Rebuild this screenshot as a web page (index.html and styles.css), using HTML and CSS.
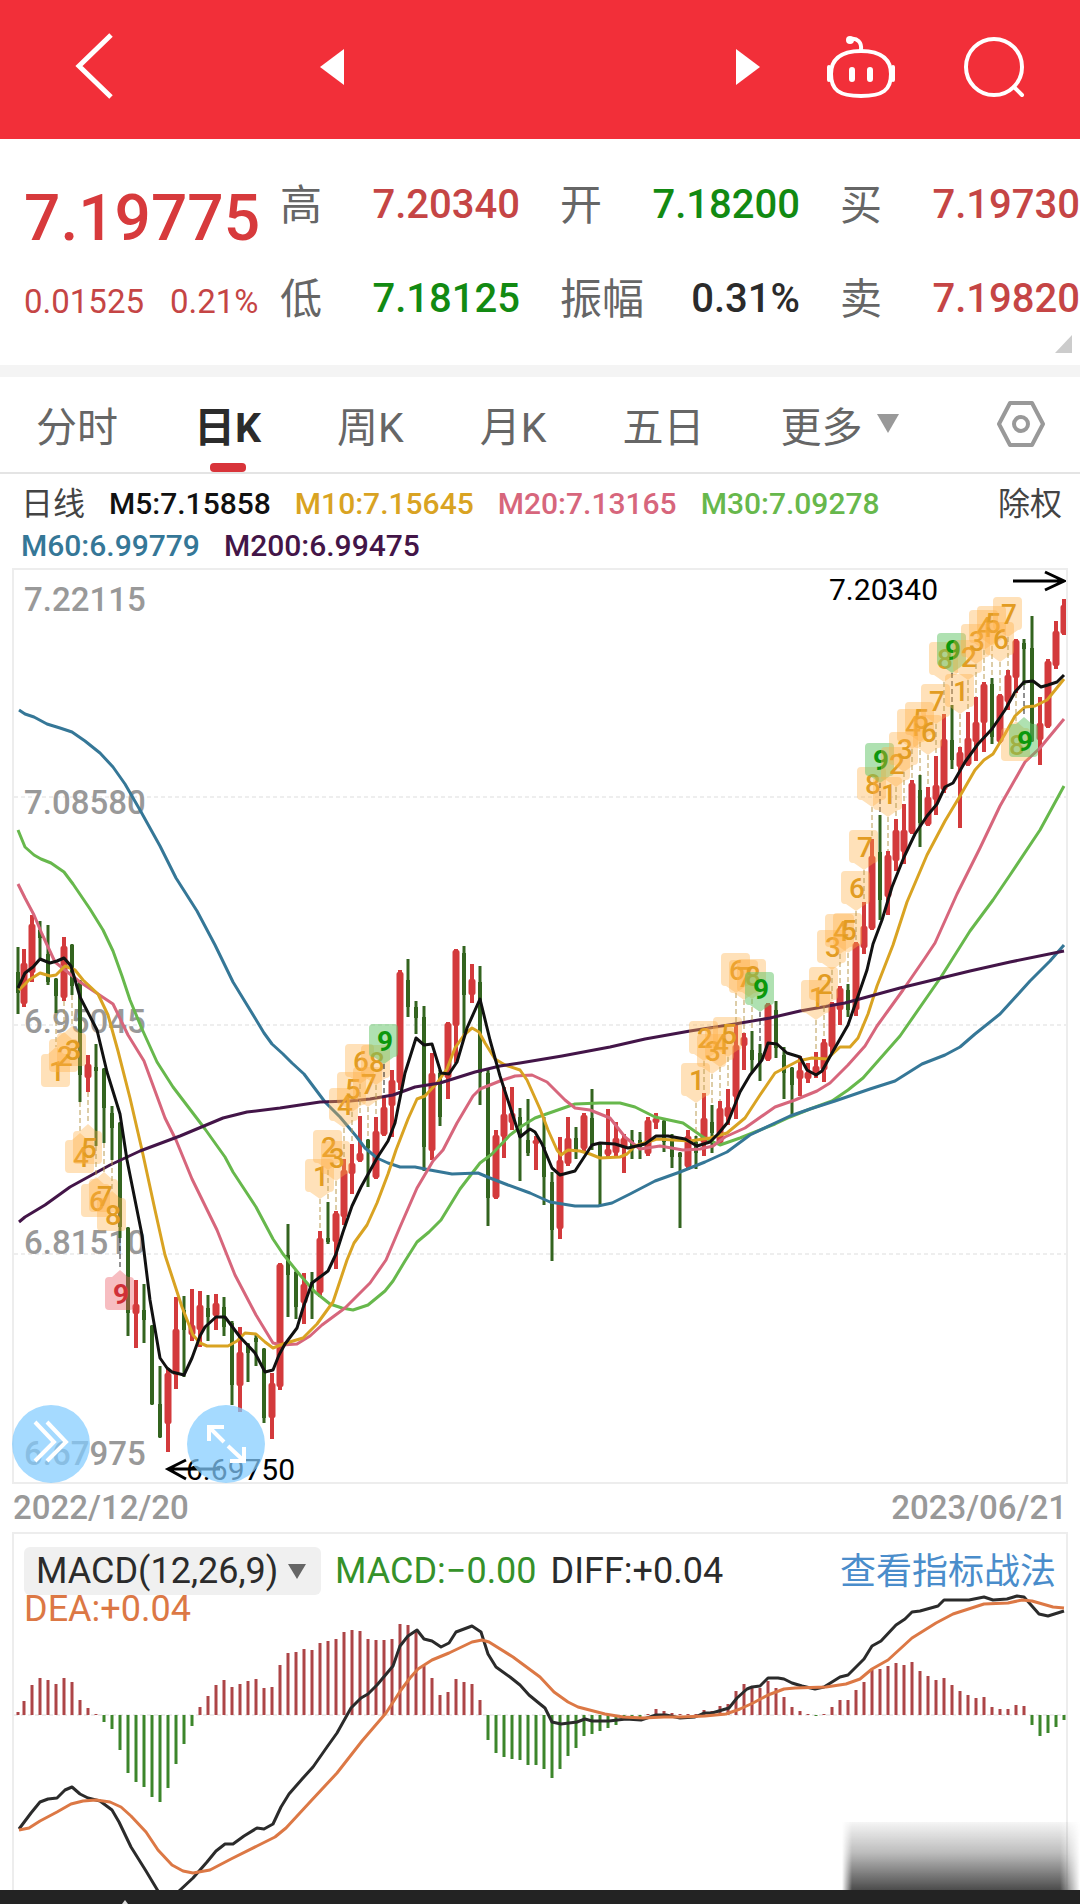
FILE: index.html
```
<!DOCTYPE html>
<html lang="zh-CN">
<head>
    <meta charset="UTF-8">
    <meta name="viewport" content="width=device-width, initial-scale=1.0">
    <title>日K行情</title>
    <link rel="stylesheet" href="styles.css">
</head>
<body>
    <!-- top bar -->
    <header class="topbar">
        <button class="icon-button" aria-label="返回">
            <svg width="50" height="70" viewBox="0 0 50 70"><path d="M43 3 L11 34 L43 65" fill="none" stroke="#fff" stroke-width="5"/></svg>
        </button>
        <nav class="switcher">
            <button class="icon-button" aria-label="上一个">
                <svg width="24" height="36" viewBox="0 0 24 36"><path d="M24 0 V36 L0 18 Z" fill="#fff"/></svg>
            </button>
            <button class="icon-button" aria-label="下一个">
                <svg width="24" height="36" viewBox="0 0 24 36"><path d="M0 0 V36 L24 18 Z" fill="#fff"/></svg>
            </button>
        </nav>
        <button class="icon-button" aria-label="助手">
            <svg width="70" height="66" viewBox="0 0 70 66">
                <g fill="none" stroke="#fff" stroke-width="4" stroke-linecap="round">
                    <path d="M35 17 C57 17 65 27 65 40 C65 56 57 62 35 62 C13 62 5 56 5 40 C5 27 13 17 35 17 Z"/>
                    <path d="M35 16 C36 8 31 4 25 5"/>
                    <path d="M3 33 V46 M67 33 V46"/>
                    <path d="M26 36 V45 M44 36 V45" stroke-width="6"/>
                </g>
                <circle cx="24" cy="6" r="4" fill="#fff"/>
            </svg>
        </button>
        <button class="icon-button" aria-label="搜索">
            <svg width="64" height="64" viewBox="0 0 64 64">
                <g fill="none" stroke="#fff" stroke-width="4" stroke-linecap="round"><circle cx="30" cy="32" r="28"/><path d="M50 52 L58 60"/></g>
            </svg>
        </button>
    </header>

    <!-- quote numbers -->
    <section class="quote">
        <div class="primary">
            <div class="price">7.19775</div>
            <div class="change"><span>0.01525</span><span>0.21%</span></div>
        </div>
        <dl class="details">
            <div><dt>高</dt><dd class="up">7.20340</dd></div>
            <div><dt>开</dt><dd class="down">7.18200</dd></div>
            <div><dt>买</dt><dd class="up">7.19730</dd></div>
            <div><dt>低</dt><dd class="down">7.18125</dd></div>
            <div><dt>振幅</dt><dd>0.31%</dd></div>
            <div><dt>卖</dt><dd class="up">7.19820</dd></div>
        </dl>
        <span class="corner"></span>
    </section>

    <!-- period tabs -->
    <nav class="tabs">
        <button>分时</button>
        <button class="active">日K</button>
        <button>周K</button>
        <button>月K</button>
        <button>五日</button>
        <button class="more">更多<svg width="22" height="19" viewBox="0 0 22 19"><path d="M0 0 H22 L11 19 Z" fill="#999"/></svg></button>
        <button class="settings" aria-label="设置">
            <svg width="50" height="48" viewBox="0 0 50 48"><g fill="none" stroke="#999" stroke-width="4" stroke-linejoin="round"><path d="M14 3 H36 L47 24 L36 45 H14 L3 24 Z"/><circle cx="25" cy="24" r="7"/></g></svg>
        </button>
    </nav>

    <!-- moving averages -->
    <div class="averages">
        <div class="list">
            <span class="name">日线</span>
            <span class="m5">M5:7.15858</span>
            <span class="m10">M10:7.15645</span>
            <span class="m20">M20:7.13165</span>
            <span class="m30">M30:7.09278</span>
            <span class="m60">M60:6.99779</span>
            <span class="m200">M200:6.99475</span>
        </div>
        <button>除权</button>
    </div>

    <!-- candles -->
    <section class="chart">
        <svg id="kline" viewBox="14 570 1052 912">
            <g class="grid"><path d="M14 797 H1066 M14 1025 H1066 M14 1254 H1066"/></g>
            <g class="axis">
                <text x="24" y="611">7.22115</text>
                <text x="24" y="814">7.08580</text>
                <text x="24" y="1033">6.95045</text>
                <text x="24" y="1254">6.81510</text>
                <text x="24" y="1465">6.67975</text>
            </g>
            <g id="candles"></g>
            <g id="lines"></g>
            <g id="badges"></g>
            <g class="extreme">
                <text x="829" y="600">7.20340</text>
                <path d="M1013 581 H1064 M1045 572 L1064 581 L1045 590"/>
                <text x="186" y="1480">6.69750</text>
                <path d="M220 1469 H168 M186 1460 L168 1469 L186 1479"/>
            </g>
        </svg>
        <div class="tools">
            <button aria-label="展开"><svg width="78" height="78" viewBox="0 0 78 78"><path d="M23 17 L42 37 L23 56 M35 17 L54 37 L35 56"/></svg></button>
            <button aria-label="全屏"><svg width="78" height="78" viewBox="0 0 78 78"><path d="M37 37 L22 22 M22 36 V22 H37 M41 41 L57 56 M57 42 V56 H43"/></svg></button>
        </div>
    </section>
    <div class="dates"><span>2022/12/20</span><span>2023/06/21</span></div>

    <!-- macd -->
    <section class="chart macd">
        <svg id="macd" viewBox="14 1534 1052 356">
            <path class="zero" d="M14 1715 H1066"/>
        </svg>
        <div class="macd-head">
            <div class="picker">
                <select aria-label="指标"><option>MACD(12,26,9)</option></select>
                <svg width="18" height="15" viewBox="0 0 18 15"><path d="M0 0 H18 L9 15 Z" fill="#666"/></svg>
            </div>
            <span class="macd-value">MACD:−0.00</span>
            <span>DIFF:+0.04</span>
            <a href="#">查看指标战法</a>
        </div>
        <div class="dea">DEA:+0.04</div>
        <div class="shade"></div>
    </section>
    <footer class="bottombar">
        <svg width="10" height="4" viewBox="0 0 10 4"><path d="M5 0 L8 4 H2 Z" fill="#ddd"/></svg>
    </footer>

    <script src="chart.js"></script>
</body>
</html>
```

FILE: styles.css
```
* {
    margin: 0;
    padding: 0;
    box-sizing: border-box;
}

body {
    display: flex;
    flex-direction: column;
    min-height: 100vh;
    background-color: #fff;
    color: #2b2b2b;
    font-family: Roboto, "Noto Sans CJK SC", sans-serif;
    overflow-x: hidden;
}

button {
    border: none;
    background: none;
    color: inherit;
    font: inherit;
    cursor: pointer;
}

svg {
    display: block;
}

/* top bar */
.topbar {
    display: flex;
    align-items: center;
    height: 139px;
    padding: 0 52px 6px 68px;
    background-color: #f22f39;
}

.switcher {
    flex: 1;
    display: flex;
    justify-content: space-between;
    margin: 0 66px 0 202px;
}

.topbar > .icon-button:last-child {
    margin-left: 68px;
}

/* quote numbers */
.quote {
    position: relative;
    display: flex;
    height: 226px;
    padding: 18px 0 20px 24px;
}

.primary {
    width: 256px;
    color: #d73a3c;
}

.price {
    padding-top: 12px;
    font-size: 64px;
    font-weight: 500;
    line-height: 100px;
}

.change {
    display: flex;
    gap: 26px;
    color: #c54545;
    font-size: 33px;
    line-height: 66px;
}

.details {
    flex: 1;
    display: grid;
    grid-template-columns: repeat(3, 1fr);
    grid-auto-rows: 94px;
    column-gap: 40px;
}

.details div {
    display: flex;
    justify-content: space-between;
    align-items: center;
}

.details dt {
    padding-bottom: 6px;
    color: #666;
    font-size: 42px;
}

.details dd {
    font-size: 40px;
    font-weight: 500;
}

.details .up {
    color: #c54545;
}

.details .down {
    color: #128a12;
}

.corner {
    position: absolute;
    right: 8px;
    bottom: 12px;
    border-left: 17px solid transparent;
    border-bottom: 18px solid #ccc;
}

/* period tabs */
.tabs {
    display: flex;
    gap: 76px;
    height: 109px;
    padding: 0 34px 0 36px;
    border-top: 12px solid #f4f4f4;
    border-bottom: 2px solid #e4e4e4;
    color: #666;
    font-size: 41px;
}

.tabs button {
    position: relative;
    padding-bottom: 2px;
    white-space: nowrap;
}

.tabs .active {
    color: #2b2b2b;
    font-weight: 700;
}

.tabs .active::after {
    content: "";
    position: absolute;
    left: 50%;
    bottom: 0;
    width: 36px;
    height: 9px;
    margin-left: -18px;
    border-radius: 4px;
    background-color: #d8343a;
}

.tabs .more {
    display: flex;
    align-items: center;
    gap: 14px;
}

.tabs .settings {
    margin-left: auto;
}

/* moving averages */
.averages {
    display: flex;
    align-items: flex-start;
    height: 94px;
    padding: 9px 18px 0 21px;
    font-size: 30px;
    font-weight: 500;
    line-height: 42px;
}

.averages .list {
    flex: 1;
    display: flex;
    flex-wrap: wrap;
    column-gap: 24px;
}

.averages .name,
.averages button {
    color: #444;
    font-size: 32px;
    font-weight: 400;
}

.m5 { color: #111; }
.m10 { color: #d9a322; }
.m20 { color: #d7667c; }
.m30 { color: #67b84c; }
.m60 { color: #357797; }
.m200 { color: #431548; }

/* charts */
.chart {
    position: relative;
    margin: 0 12px;
    border: 2px solid #ededed;
}

.chart > svg {
    width: 100%;
    height: auto;
}

.grid path,
.zero {
    stroke: #ddd;
    stroke-dasharray: 4 3;
}

.axis {
    fill: #999;
    font-size: 33px;
    font-weight: 500;
}

.red { fill: #d33a3c; }
.green { fill: #33641f; }

#lines polyline,
#macd polyline {
    fill: none;
    stroke: currentColor;
    stroke-width: 3;
    stroke-linejoin: round;
}

.badge text {
    font-size: 28px;
    font-weight: 500;
    text-anchor: middle;
    fill: #e29c22;
}

.badge path { fill: rgba(255, 176, 70, 0.38); }
.badge line { stroke: #b99a50; stroke-dasharray: 5 3; }

.badge.nine text { font-weight: 700; fill: #0c980c; }
.badge.nine path { fill: rgba(95, 195, 100, 0.5); }
.badge.nine line { stroke: #222; }

.badge.low text { fill: #d03038; }
.badge.low path { fill: rgba(235, 90, 100, 0.4); }

.extreme {
    fill: #000;
    font-size: 30px;
}

.extreme path {
    fill: none;
    stroke: #000;
    stroke-width: 3;
}

.tools {
    position: absolute;
    left: -2px;
    bottom: -1px;
    display: flex;
    gap: 97px;
}

.tools button {
    border-radius: 50%;
    background-color: rgba(130, 204, 255, 0.72);
}

.tools path {
    fill: none;
    stroke: #fff;
    stroke-width: 4;
}

.dates {
    display: flex;
    justify-content: space-between;
    padding: 0 13px;
    color: #999;
    font-size: 33px;
    font-weight: 500;
    line-height: 48px;
}

/* macd */
.macd {
    border-bottom: none;
    font-size: 36px;
}

.macd-head {
    position: absolute;
    top: 8px;
    left: 10px;
    right: 10px;
    display: flex;
    align-items: center;
}

.macd-head span {
    margin-left: 14px;
}

.macd-head .macd-value,
.bar-down {
    color: #35912a;
    fill: #3c862b;
}

.bar-up { fill: #ad4547; }
.diff { color: #2b2b2b; }

.macd-head a {
    margin-left: auto;
    padding-bottom: 6px;
    color: #4a8dcb;
    text-decoration: none;
}

.picker {
    position: relative;
}

.picker select {
    appearance: none;
    height: 48px;
    padding: 0 42px 0 12px;
    border: none;
    border-radius: 6px;
    background-color: #f0f0f0;
    color: #2b2b2b;
    font: inherit;
}

.picker svg {
    position: absolute;
    right: 15px;
    top: 17px;
    pointer-events: none;
}

.dea {
    position: absolute;
    top: 52px;
    left: 10px;
    line-height: 46px;
}

.dea,
.dea-line {
    color: #dc7845;
}

.shade {
    position: absolute;
    right: -14px;
    bottom: 0;
    width: 238px;
    height: 68px;
    background: linear-gradient(rgba(90, 90, 90, 0.06), rgba(90, 90, 90, 0.4) 45%, #4c4c4c);
    mask-image: linear-gradient(to right, transparent, #000 10px, #000 218px, transparent);
}

.bottombar {
    flex: 1;
    display: flex;
    align-items: flex-end;
    min-height: 14px;
    padding-left: 120px;
    background-color: #232323;
}
```

FILE: chart.js
```
const NS = "http://www.w3.org/2000/svg";

function add(parent, tag, attrs, text) {
    const el = document.createElementNS(NS, tag);
    for (const key in attrs) el.setAttribute(key, attrs[key]);
    if (text) el.textContent = text;
    parent.appendChild(el);
    return el;
}

// one slot every 8 units
const slot = i => i === 0 ? 18 : 16 + 8 * i;

// color, high, body top, body bottom, low
const candles = `G 947 972 993 1014|R 949 963 1004 1007|R 915 924 973 982|G 921 930 938 958|G 925 954 982 985
G 978 979 996 1013|R 937 946 998 1001|G 944 945 986 995|G 980 981 1075 1102|R 1055 1064 1078 1092
G 1044 1067 1071 1146|G 1068 1069 1108 1143|G 1106 1113 1128 1160|G 1122 1123 1227 1238|G 1227 1228 1313 1336
R 1280 1304 1314 1348|G 1284 1310 1320 1343|G 1325 1326 1404 1405|G 1366 1404 1437 1438|R 1368 1373 1424 1452
R 1297 1329 1375 1389|G 1296 1310 1330 1377|R 1289 1325 1335 1341|R 1291 1305 1330 1347|G 1295 1308 1317 1341
R 1294 1303 1316 1330|G 1297 1307 1327 1336|G 1321 1323 1385 1405|R 1327 1352 1386 1412|G 1343 1344 1353 1382
G 1335 1338 1342 1366|G 1348 1349 1418 1423|R 1373 1383 1418 1439|R 1263 1264 1387 1390|G 1224 1255 1275 1317
G 1270 1272 1307 1319|R 1273 1284 1303 1324|G 1272 1282 1290 1319|R 1231 1238 1293 1297|G 1202 1238 1242 1244
R 1211 1213 1242 1269|R 1159 1170 1217 1225|R 1144 1163 1174 1194|R 1116 1153 1161 1162|G 1139 1140 1148 1187
R 1117 1131 1178 1179|R 1097 1107 1135 1136|R 1070 1080 1106 1137|R 970 972 1083 1090|G 959 980 1007 1017
G 1001 1007 1018 1034|G 1006 1017 1147 1171|R 1053 1073 1151 1160|G 1070 1073 1117 1126|R 1022 1023 1078 1099
R 949 950 1026 1063|G 946 953 995 1035|R 964 979 995 1003|G 966 982 1073 1105|G 1070 1073 1198 1226
R 1130 1135 1198 1199|R 1087 1114 1137 1158|R 1087 1113 1123 1130|G 1108 1117 1137 1181|G 1099 1140 1153 1156
R 1136 1140 1144 1170|G 1117 1147 1177 1205|G 1172 1182 1230 1261|R 1137 1160 1229 1239|R 1117 1138 1164 1166
G 1127 1138 1150 1159|R 1113 1115 1149 1153|G 1089 1118 1145 1150|G 1144 1145 1157 1206|R 1109 1149 1155 1157
R 1122 1138 1153 1157|R 1134 1138 1148 1173|G 1130 1140 1148 1159|G 1132 1140 1147 1159|R 1117 1120 1154 1156
R 1113 1118 1123 1129|G 1118 1121 1142 1152|G 1134 1141 1157 1168|G 1152 1153 1157 1228|R 1130 1136 1167 1170
G 1136 1142 1153 1169|R 1093 1118 1143 1156|G 1105 1122 1133 1153|R 1101 1108 1143 1145|R 1089 1107 1117 1125
R 1024 1045 1097 1119|R 1033 1037 1046 1070|G 1031 1050 1060 1072|G 1044 1053 1062 1081|R 1003 1004 1060 1061
G 1001 1010 1048 1058|G 1047 1055 1073 1099|G 1067 1068 1085 1114|R 1056 1070 1079 1096|R 1063 1072 1079 1083
R 1052 1066 1075 1078|R 1039 1042 1070 1082|R 1002 1003 1047 1053|R 986 988 1010 1025|G 984 990 1010 1017
R 942 943 1010 1016|R 902 926 948 954|R 839 856 929 930|G 815 852 900 920|R 851 855 897 915
R 819 830 861 871|R 804 830 852 864|R 780 783 833 834|G 775 790 823 847|R 787 797 825 826
R 756 785 800 815|R 714 739 790 793|G 705 740 760 769|R 747 752 767 828|R 712 738 765 766
R 697 722 742 761|R 682 684 723 752|G 678 684 737 744|R 694 695 742 743|R 670 675 702 710
R 639 640 678 693|G 639 643 649 685|G 616 648 741 742|R 697 723 740 765|R 659 661 727 728
R 621 631 666 669|R 599 605 634 635`.split(/[|\n]/).map(row => row.split(" "));

const candleLayer = document.getElementById("candles");
candles.forEach(([color, high, top, bottom, low], i) => {
    const red = color === "R";
    const name = red ? "red" : "green";
    const wick = red ? 4 : 3;
    const body = red ? 7 : 4;
    add(candleLayer, "rect", { class: name, x: slot(i) - wick / 2, y: high, width: wick, height: low - high });
    add(candleLayer, "rect", { class: name, x: slot(i) - body / 2, y: top, width: body, height: bottom - top, rx: red ? 2 : 0 });
});

const averages = {
    m30: "18,830 25,847 34,855 41,859 51,863 64,872 73,884 90,909 103,930 113,951 122,976 130,1000 142,1029 157,1062 173,1087 205,1129 225,1157 233,1172 256,1207 273,1239 283,1254 300,1275 315,1292 330,1304 342,1308 353,1310 368,1305 385,1291 393,1281 405,1261 417,1242 429,1232 441,1220 460,1189 480,1163 492,1154 510,1135 522,1126 535,1118 555,1111 575,1104 600,1103 620,1103 635,1107 655,1117 683,1123 703,1137 720,1145 740,1138 755,1132 775,1124 790,1117 810,1109 832,1101 848,1090 863,1078 900,1036 941,977 970,931 993,900 1010,875 1040,830 1064,786",
    m60: "19,710 25,714 34,717 47,724 60,728 72,732 85,741 100,753 113,767 125,784 140,810 160,846 176,878 197,911 215,945 233,982 255,1018 264,1033 272,1044 283,1054 292,1063 304,1074 325,1102 340,1117 356,1136 365,1148 377,1158 388,1163 400,1167 415,1167 430,1170 452,1174 478,1173 490,1178 508,1185 530,1193 550,1202 575,1206 598,1206 612,1203 630,1194 655,1181 680,1172 705,1162 727,1152 750,1135 775,1123 790,1116 810,1109 835,1101 870,1089 895,1081 922,1064 945,1055 960,1047 975,1034 1000,1014 1030,981 1050,961 1064,945",
    m20: "18,884 25,898 34,915 42,934 55,962 65,970 80,982 98,994 113,1004 128,1035 144,1061 165,1118 176,1140 192,1179 217,1230 235,1275 256,1315 273,1343 282,1345 297,1344 310,1336 322,1325 345,1308 370,1283 386,1260 400,1227 417,1188 433,1161 443,1150 457,1123 473,1096 480,1089 500,1081 515,1076 532,1075 547,1082 565,1100 575,1108 590,1110 610,1118 625,1137 640,1149 660,1146 683,1150 700,1149 713,1146 725,1137 745,1128 775,1107 795,1100 817,1091 830,1083 848,1065 865,1046 877,1026 890,1008 903,990 925,958 935,943 957,894 980,848 1000,806 1025,762 1040,748 1064,719",
    m10: "19,990 29,980 40,973 50,976 56,975 65,966 75,970 83,980 98,994 108,1015 118,1051 130,1098 142,1150 155,1210 165,1255 182,1307 193,1335 200,1343 207,1346 228,1346 237,1341 245,1333 256,1334 265,1342 273,1348 283,1344 303,1338 317,1324 333,1302 338,1287 347,1260 354,1243 367,1225 377,1203 388,1174 396,1150 408,1119 417,1099 425,1096 437,1083 447,1069 455,1048 464,1035 472,1028 479,1032 485,1043 495,1059 505,1065 520,1070 527,1080 540,1109 548,1130 557,1150 561,1155 568,1150 580,1151 590,1154 600,1158 620,1157 627,1154 635,1146 657,1139 690,1141 710,1138 727,1133 745,1118 760,1095 775,1073 798,1061 812,1058 827,1059 840,1047 850,1047 858,1038 868,1014 877,986 893,945 907,902 927,855 945,821 960,796 975,770 984,760 993,754 1005,734 1015,716 1025,707 1035,706 1047,700 1056,689 1064,679",
    m200: "19,1222 25,1217 45,1205 70,1187 110,1165 140,1151 180,1136 223,1118 247,1112 280,1108 320,1102 350,1101 370,1099 393,1095 415,1087 440,1083 475,1072 500,1066 520,1063 562,1056 610,1047 645,1039 690,1031 735,1024 770,1018 800,1011 845,1003 900,988 970,971 1010,962 1064,951",
    m5: "18,988 25,973 33,967 40,959 50,963 57,961 64,958 71,966 80,997 97,1030 107,1072 120,1114 127,1160 142,1235 150,1300 160,1358 167,1368 172,1372 184,1375 192,1358 200,1336 205,1327 216,1317 225,1317 240,1337 255,1353 265,1372 273,1370 279,1355 285,1344 297,1328 303,1308 312,1283 328,1271 336,1254 343,1232 352,1206 361,1187 377,1158 388,1141 395,1123 405,1073 416,1038 424,1045 432,1044 441,1073 449,1074 457,1062 467,1028 480,999 490,1040 500,1076 513,1116 520,1137 530,1129 535,1132 542,1144 552,1168 560,1175 575,1171 592,1145 600,1143 615,1144 628,1148 645,1144 656,1136 668,1136 685,1139 697,1146 710,1142 718,1134 728,1122 740,1092 750,1075 762,1060 768,1043 777,1044 787,1053 800,1057 807,1070 816,1075 822,1071 832,1053 848,1025 857,999 867,970 873,944 882,920 892,887 904,857 915,834 927,816 937,804 945,787 953,783 965,762 978,744 992,729 1005,710 1015,692 1024,682 1033,681 1041,687 1048,685 1057,682 1064,675"
};
for (const name in averages) {
    add(document.getElementById("lines"), "polyline", { class: name, points: averages[name] });
}

// slot, digit, top of the box, 1 = box hangs below the candle
const badges = [
    [5, 1, 1054, 1], [6, 2, 1039, 1], [7, 3, 1033, 1], [8, 4, 1140, 1], [9, 5, 1131, 1],
    [10, 6, 1184, 1], [11, 7, 1179, 1], [12, 8, 1198, 1], [13, 9, 1277, 1],
    [38, 1, 1159], [39, 2, 1130], [40, 3, 1141], [41, 4, 1088], [42, 5, 1072], [43, 6, 1044], [44, 7, 1067], [45, 8, 1045], [46, 9, 1024],
    [85, 1, 1063], [86, 2, 1021], [87, 3, 1034], [88, 4, 1027], [89, 5, 1017], [90, 6, 953], [91, 7, 960], [92, 8, 959], [93, 9, 972],
    [100, 1, 980], [101, 2, 967], [102, 3, 930], [103, 4, 914], [104, 5, 913], [105, 6, 871], [106, 7, 830], [107, 8, 767], [108, 9, 743],
    [109, 1, 777], [110, 2, 747], [111, 3, 732], [112, 4, 709], [113, 5, 702], [114, 6, 715], [115, 7, 684], [116, 8, 642], [117, 9, 633],
    [118, 1, 674], [119, 2, 640], [120, 3, 624], [121, 4, 610], [122, 5, 606], [123, 6, 622], [124, 7, 597],
    [125, 8, 728, 1], [126, 9, 724, 1]
];
badges.forEach(([i, digit, y, below]) => {
    const x = slot(i);
    const low = i === 13;
    const g = add(document.getElementById("badges"), "g", { class: "badge" + (digit === 9 ? " nine" : "") + (low ? " low" : "") });
    const box = `M${x - 11} ${y} H${x + 10} q4 0 4 4 V${y + 29} q0 4 -4 4 H${x - 11} q-4 0 -4 -4 V${y + 4} q0 -4 4 -4 Z`;
    const tip = below ? `M${x - 8} ${y} L${x} ${y - 7} L${x + 8} ${y} Z` : `M${x - 10} ${y + 33} L${x} ${y + 40} L${x + 10} ${y + 33} Z`;
    if (below) {
        add(g, "line", { x1: x, y1: candles[i][4], x2: x, y2: y - 7 });
    } else {
        add(g, "line", { x1: x, y1: y + 40, x2: x, y2: candles[i][1] });
    }
    add(g, "path", { d: box + tip });
    add(g, "text", { x: x + 1, y: y + 27 }, String(digit));
});

// macd histogram, heights from the zero line
const bars = [3, 14, 30, 37, 35, 31, 37, 33, 15, 7, 1, -7, -14, -35, -58, -67, -72, -82, -87, -73, -49, -29, -11, 8, 19, 30, 35, 28, 31, 34, 36, 27, 28, 50, 62, 63, 66, 65, 72, 74, 76, 83, 85, 84, 76, 75, 75, 76, 91, 90, 83, 49, 37, 20, 23, 36, 33, 31, 15, -25, -38, -42, -44, -45, -50, -50, -54, -63, -54, -41, -33, -21, -19, -16, -13, -10, -5, -3, -2, 1, 6, 4, 2, 1, 1, 1, 5, 4, 9, 11, 24, 31, 28, 27, 34, 27, 18, 8, 4, 1, -1, 1, 8, 15, 15, 25, 33, 45, 46, 49, 52, 50, 53, 44, 39, 35, 37, 30, 24, 20, 17, 18, 8, 6, 6, 10, 9, -10, -21, -18, -12, -5];
const macd = document.getElementById("macd");
bars.forEach((h, i) => {
    add(macd, "rect", { class: h > 0 ? "bar-up" : "bar-down", x: slot(i) - 1.5, y: h > 0 ? 1715 - h : 1715, width: 3, height: Math.abs(h) });
});
add(macd, "polyline", { class: "diff", points: "19,1829 31,1813 40,1802 48,1799 57,1798 65,1790 72,1787 80,1794 88,1798 100,1801 112,1810 119,1822 131,1847 146,1871 158,1891 168,1902 179,1891 193,1878 207,1862 216,1851 225,1844 233,1844 244,1836 257,1828 264,1829 273,1824 281,1807 289,1794 303,1778 313,1767 327,1747 337,1733 351,1708 361,1698 368,1694 377,1685 393,1666 400,1646 408,1636 417,1630 424,1639 432,1641 441,1647 449,1643 456,1632 472,1626 481,1632 488,1654 496,1667 510,1677 520,1685 529,1695 540,1704 545,1708 552,1722 561,1724 577,1722 585,1719 592,1721 609,1721 626,1719 641,1720 656,1715 666,1715 680,1718 695,1717 704,1713 712,1713 729,1708 737,1698 747,1689 752,1687 760,1686 768,1678 778,1678 784,1679 792,1683 802,1686 815,1689 824,1687 840,1677 848,1675 864,1659 872,1646 881,1641 896,1625 905,1619 912,1612 920,1611 938,1606 944,1600 969,1600 984,1597 993,1600 1007,1599 1017,1596 1024,1597 1039,1614 1048,1616 1064,1611" });
add(macd, "polyline", { class: "dea-line", points: "19,1830 29,1828 40,1821 57,1812 71,1804 83,1801 96,1800 110,1802 121,1807 131,1816 146,1832 158,1850 172,1865 183,1871 193,1873 210,1870 231,1859 257,1846 275,1837 286,1828 310,1802 337,1773 362,1741 386,1713 401,1690 410,1678 418,1669 432,1660 449,1653 472,1642 482,1640 489,1642 513,1657 540,1677 554,1692 568,1702 578,1707 605,1714 623,1717 643,1718 664,1717 681,1717 705,1716 726,1714 740,1709 753,1703 768,1695 784,1689 795,1688 826,1687 846,1684 860,1679 872,1669 888,1660 912,1638 936,1623 953,1614 984,1604 1008,1603 1022,1600 1032,1601 1053,1607 1064,1608" });
```
